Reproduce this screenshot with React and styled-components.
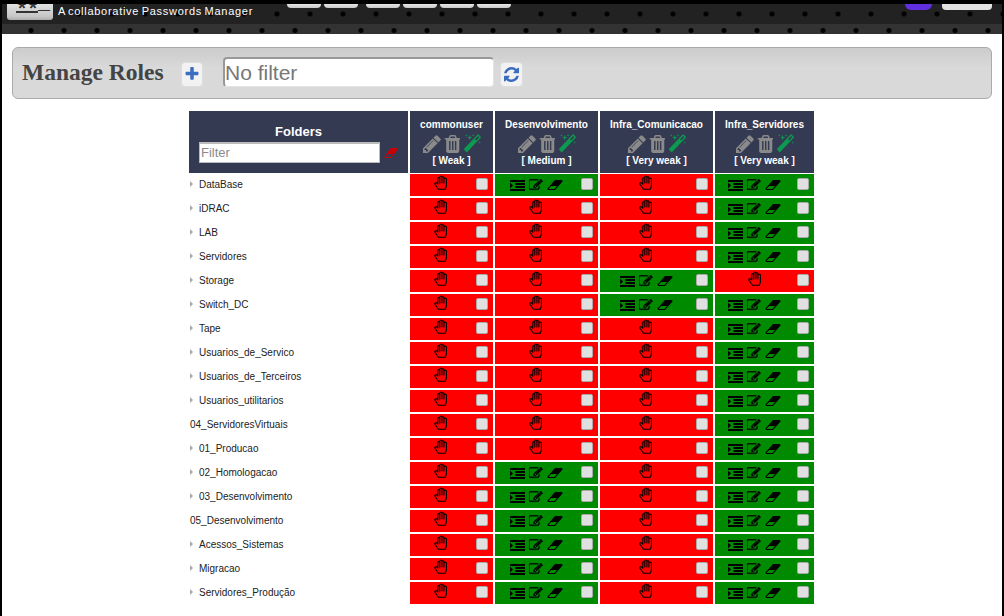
import React from "react";
import styled, { createGlobalStyle } from "styled-components";

const Global = createGlobalStyle`
  html, body { margin: 0; padding: 0; background: #000; height: 616px; overflow: hidden; }
  * { box-sizing: border-box; }
`;

const PATHS = {
  indent: "M352 832q0 14-9 23l-288 288q-9 9-23 9-13 0-22.5-9.5t-9.5-22.5v-576q0-13 9.5-22.5t22.5-9.5q14 0 23 9l288 288q9 9 9 23zm1440 480v192q0 13-9.5 22.5t-22.5 9.5h-1728q-13 0-22.5-9.5t-9.5-22.5v-192q0-13 9.5-22.5t22.5-9.5h1728q13 0 22.5 9.5t9.5 22.5zm0-384v192q0 13-9.5 22.5t-22.5 9.5h-1088q-13 0-22.5-9.5t-9.5-22.5v-192q0-13 9.5-22.5t22.5-9.5h1088q13 0 22.5 9.5t9.5 22.5zm0-384v192q0 13-9.5 22.5t-22.5 9.5h-1088q-13 0-22.5-9.5t-9.5-22.5v-192q0-13 9.5-22.5t22.5-9.5h1088q13 0 22.5 9.5t9.5 22.5zm0-384v192q0 13-9.5 22.5t-22.5 9.5h-1728q-13 0-22.5-9.5t-9.5-22.5v-192q0-13 9.5-22.5t22.5-9.5h1728q13 0 22.5 9.5t9.5 22.5z",
  edit: "M888 1184l116-116-152-152-116 116v56h96v96h56zm440-720q-16-16-33 1l-350 350q-17 17-1 33t33-1l350-350q17-17 1-33zm80 594v190q0 119-84.5 203.5t-203.5 84.5h-832q-119 0-203.5-84.5t-84.5-203.5v-832q0-119 84.5-203.5t203.5-84.5h832q63 0 117 25 15 7 18 23 3 17-9 29l-49 49q-14 14-32 8-23-6-45-6h-832q-66 0-113 47t-47 113v832q0 66 47 113t113 47h832q66 0 113-47t47-113v-126q0-13 9-22l64-64q15-15 35-7t20 29zm-96-738l288 288-672 672h-288v-288zm444 132l-92 92-288-288 92-92q28-28 68-28t68 28l152 152q28 28 28 68t-28 68z",
  eraser: "M960 1408l336-384h-768l-336 384h768zm1013-1077q15 34 9.5 71.5t-30.5 65.5l-896 1024q-38 44-96 44h-768q-38 0-69.5-20.5t-47.5-54.5q-15-34-9.5-71.5t30.5-65.5l896-1024q38-44 96-44h768q38 0 70 20.5t47 54.5z",
  trash: "M704 1376v-704q0-14-9-23t-23-9h-64q-14 0-23 9t-9 23v704q0 14 9 23t23 9h64q14 0 23-9t9-23zm256 0v-704q0-14-9-23t-23-9h-64q-14 0-23 9t-9 23v704q0 14 9 23t23 9h64q14 0 23-9t9-23zm256 0v-704q0-14-9-23t-23-9h-64q-14 0-23 9t-9 23v704q0 14 9 23t23 9h64q14 0 23-9t9-23zm-544-992h448l-48-117q-7-9-17-11h-317q-10 2-17 11zm928 32v64q0 14-9 23t-23 9h-96v948q0 83-47 143.5t-113 60.5h-832q-66 0-113-57.5t-47-140.5v-954h-96q-14 0-23-9t-9-23v-64q0-14 9-23t23-9h309l70-167q15-37 54-63t79-26h320q40 0 79 26t54 63l70 167h309q14 0 23 9t9 23z",
  pencil: "M491 1536l91-91-235-235-91 91v107h128v128h107zm523-928q0-22-22-22-10 0-17 7l-542 542q-7 7-7 17 0 22 22 22 10 0 17-7l542-542q7-7 7-17zm-54-192l416 416-832 832h-416v-416zm683 96q0 53-37 90l-166 166-416-416 166-165q36-38 90-38 53 0 91 38l235 234q37 39 37 91z",
  magic: "M1254 581l293-293-107-107-293 293zm447-293q0 27-18 45l-1286 1286q-18 18-45 18t-45-18l-198-198q-18-18-18-45t18-45l1286-1286q18-18 45-18t45 18l198 198q18 18 18 45zm-1351-190l98 30-98 30-30 98-30-98-98-30 98-30 30-98zm350 162l196 60-196 60-60 196-60-196-196-60 196-60 60-196zm930 478l98 30-98 30-30 98-30-98-98-30 98-30 30-98zm-640-640l98 30-98 30-30 98-30-98-98-30 98-30 30-98z",
  plus: "M1600 736v192q0 40-28 68t-68 28h-416v416q0 40-28 68t-68 28h-192q-40 0-68-28t-28-68v-416h-416q-40 0-68-28t-28-68v-192q0-40 28-68t68-28h416v-416q0-40 28-68t68-28h192q40 0 68 28t28 68v416h416q40 0 68 28t28 68z",
  refresh: "M1639 1056q0 5-1 7-64 268-268 434.5t-478 166.5q-146 0-282.5-55t-243.5-157l-129 129q-19 19-45 19t-45-19-19-45v-448q0-26 19-45t45-19h448q26 0 45 19t19 45-19 45l-137 137q71 66 161 102t187 36q134 0 250-65t186-179q11-17 53-117 8-23 30-23h192q13 0 22.5 9.5t9.5 22.5zm25-800v448q0 26-19 45t-45 19h-448q-26 0-45-19t-19-45 19-45l138-138q-148-137-349-137-134 0-250 65t-186 179q-11 17-53 117-8 23-30 23h-199q-13 0-22.5-9.5t-9.5-22.5v-7q65-268 270-434.5t480-166.5q146 0 284 55.5t245 156.5l130-129q19-19 45-19t45 19 19 45z",
};

const Glyph = ({ name, w, h, box, color = "currentColor", bold = 0 }) => (
  <svg width={w} height={h} viewBox={box} preserveAspectRatio="none" fill={color} stroke={bold ? color : "none"} strokeWidth={bold} style={{ flex: "none" }}>
    <path d={PATHS[name]} />
  </svg>
);

const HandGlyph = () => (
  <svg width={14} height={15} viewBox="0 0 14 15" fill="none" stroke="currentColor" strokeWidth={1.1} strokeLinejoin="round" strokeLinecap="round" style={{ flex: "none" }}>
    <path d="M4.5 14.2 L1 9.2 C.4 8.2 1.8 7.2 2.7 8 L3.8 9.2 V3.6 C3.8 2.3 5.8 2.3 5.8 3.6 V2 C5.8 .6 7.9 .6 7.9 2 V2.6 C7.9 1.4 9.9 1.4 9.9 2.6 V4 C9.9 2.9 12.4 2.9 12.4 4 V10.5 C12.4 12 11.8 13 11.2 14.2 Z M5.8 3.6 V8 M7.9 2.6 V8 M9.9 4 V8" />
  </svg>
);

const Page = styled.div`
  width: 1004px; height: 616px; padding: 4px 2px 0; background: #000; overflow: hidden;
  font-family: "Liberation Sans", Arial, sans-serif;
`;
const Shell = styled.div`
  width: 1000px; height: 612px; background: #fff; overflow: hidden;
`;
const TopBar = styled.header`
  height: 30px; overflow: hidden;
  background: linear-gradient(#222 0, #222 20px, #333 20px, #333 30px);
`;
const DotsA = styled.div`
  height: 20px; display: flex; align-items: flex-start; padding-left: 5px;
  background: radial-gradient(circle 3px at 16.5px 10px, #000 0, #000 2px, transparent 3px) -5.5px 0 / 33px 20px repeat-x;
`;
const DotsB = styled.div`
  height: 10px;
  background: radial-gradient(circle 3px at 16.5px 6.5px, #000 0, #000 2px, transparent 3px) 12.5px 0 / 33px 10px repeat-x;
`;
const Logo = styled.div`
  width: 46px; height: 16px; background: linear-gradient(#e2e2e2, #c4c4c4 80%, #aaa); border-radius: 0 0 3px 3px;
  overflow: hidden; color: #333; font: bold 20px/13px "Liberation Mono", monospace; padding-left: 9px; white-space: nowrap; display: flex;
`;
const LogoStar = styled.span`
  width: 11px; height: 16px; display: block;
  background: linear-gradient(#333, #333) 0 7px / 100% 2px no-repeat;
`;
const LogoBar = styled.span` display: block; transform: translateY(-7px); `;
const Tagline = styled.div`
  margin-left: 5px; width: 229px; color: #fff; font-size: 11px; line-height: 14px; letter-spacing: 0.72px; word-spacing: -1.2px; white-space: nowrap;
`;
const MenuGroup = styled.div`
  display: flex; gap: 3px; margin-right: ${(p) => p.$gap || 0}px;
`;
const MenuButton = styled.div`
  width: 34px; height: 4px; background: linear-gradient(#e6e6e6, #c8c8c8); border-radius: 0 0 4px 4px;
`;
const Spacer = styled.div` flex: 1; `;
const Avatar = styled.div`
  width: 27px; height: 6px; background: #6030e0; border-radius: 0 0 10px 10px;
`;
const UserButton = styled.div`
  width: 50px; height: 6px; background: #e2e2e2; border-radius: 0 0 4px 4px; margin: 0 10px 0 10px;
`;

const Content = styled.main` padding: 13px 10px 0; `;
const Panel = styled.section`
  height: 52px; display: flex; align-items: center; padding-left: 9px;
  background: linear-gradient(#ccc, #d9d9d9 40%, #d9d9d9);
  border: 1px solid #aaa; border-radius: 6px;
`;
const Title = styled.h1`
  margin: -2px 0 0; font: bold 23.5px/30px "Liberation Serif", serif; color: #444; width: 159px;
`;
const IconButton = styled.button`
  width: ${(p) => p.$w}px; height: 25px; padding: 0; border: 1px solid #ddd; border-radius: 4px; background: #f2f2f2;
  display: flex; align-items: center; justify-content: center; color: #3a6cc0; margin-top: 2px;
`;
const FilterBox = styled.input`
  width: 271px; height: 30px; margin: -2px 6px 0 20px; padding: 0; border: 1px solid #e4e4e4; border-top: 2px solid #999; border-left: 2px solid #999;
  border-radius: 4px; background: #fff; font: 21px "Liberation Sans", sans-serif; color: #666;
  &::placeholder { color: #777; opacity: 1; }
`;

const Matrix = styled.div` width: 625px; margin: 12px 0 0 177px; `;
const GridRow = styled.div`
  display: grid; grid-template-columns: 219px 83px 103px 113px 99px; column-gap: 2px;
  height: ${(p) => p.$h}px; margin-bottom: ${(p) => p.$mb}px;
`;
const FolderHead = styled.div`
  background: #343a52; color: #fff; display: flex; flex-direction: column; padding: 13px 0 0 10px;
`;
const FolderTitle = styled.div`
  width: 199px; text-align: center; font-weight: bold; font-size: 13px; line-height: 15px; margin-bottom: 3px;
`;
const FolderFilterRow = styled.div` display: flex; align-items: center; gap: 4px; `;
const FolderFilter = styled.input`
  width: 181px; height: 21px; padding: 0 1px 2px; border: 1px solid #bbb; border-width: 2px 1px 1px 1px; background: #fff;
  font: 13px "Liberation Sans", sans-serif;
  &::placeholder { color: #8a8a8a; opacity: 1; }
`;
const RoleHead = styled.div`
  background: #343a52; color: #fff; font-weight: bold; font-size: 10px; text-align: center;
  display: flex; flex-direction: column; align-items: center; padding-top: 7px;
`;
const RoleName = styled.div` line-height: 13px; height: 15px; white-space: nowrap; `;
const RoleTools = styled.div` display: flex; align-items: center; gap: 3px; height: 21px; `;
const RoleStrength = styled.div` line-height: 13px; white-space: nowrap; `;

const FolderCell = styled.div`
  display: flex; align-items: center; font-size: 10px; color: #222; padding: 0 0 2px 1px; white-space: nowrap;
`;
const Arrow = styled.span`
  width: 0; height: 0; border-left: 3px solid #aaa; border-top: 3px solid transparent; border-bottom: 3px solid transparent;
  margin-right: 6px;
`;
const AccessCell = styled.div`
  position: relative; background: ${(p) => (p.$on ? "#008a00" : "#f00")}; color: #000; display: flex; align-items: center;
`;
const Icons = styled.div`
  display: flex; align-items: center; gap: 4px; height: 100%; padding-left: ${(p) => p.$pad}px;
`;
const Hand = styled.div`
  height: 100%; display: flex; justify-content: center; padding-left: ${(p) => p.$pad}px; padding-top: 1px;
`;
const Check = styled.span`
  position: absolute; right: 5px; top: 4px; width: 12px; height: 12px; background: #e0e0e0; border: 1px solid #aaa; border-radius: 2px;
`;

const W = [
  { name: "commonuser", s: "Weak", hand: 24, allow: 66 },
  { name: "Desenvolvimento", s: "Medium", hand: 34, allow: 15 },
  { name: "Infra_Comunicacao", s: "Very weak", hand: 39, allow: 20 },
  { name: "Infra_Servidores", s: "Very weak", hand: 33, allow: 13 },
];
const rows = [
  ["DataBase", 0, 1, 0, 1], ["iDRAC", 0, 0, 0, 1], ["LAB", 0, 0, 0, 1], ["Servidores", 0, 0, 0, 1],
  ["Storage", 0, 0, 1, 0], ["Switch_DC", 0, 0, 1, 1], ["Tape", 0, 0, 0, 1], ["Usuarios_de_Servico", 0, 0, 0, 1],
  ["Usuarios_de_Terceiros", 0, 0, 0, 1], ["Usuarios_utilitarios", 0, 0, 0, 1], ["04_ServidoresVirtuais", 0, 0, 0, 1, true],
  ["01_Producao", 0, 0, 0, 1], ["02_Homologacao", 0, 1, 0, 1], ["03_Desenvolvimento", 0, 1, 0, 1],
  ["05_Desenvolvimento", 0, 1, 0, 1, true], ["Acessos_Sistemas", 0, 1, 0, 1], ["Migracao", 0, 1, 0, 1], ["Servidores_Produção", 0, 1, 0, 1],
];

const RoleHeader = ({ role }) => (
  <RoleHead>
    <RoleName>{role.name}</RoleName>
    <RoleTools>
      <Glyph name="pencil" w={18} h={18} box="128 128 1536 1536" color="#8a8a8a" />
      <Glyph name="trash" w={16} h={18} box="128 128 1408 1536" color="#8a8a8a" />
      <Glyph name="magic" w={18} h={19} box="0 0 1712 1712" color="#0c9a50" />
    </RoleTools>
    <RoleStrength>[ {role.s} ]</RoleStrength>
  </RoleHead>
);

const Cell = ({ on, role }) => (
  <AccessCell $on={on}>
    {on ? (
      <Icons $pad={role.allow}>
        <Glyph name="indent" w={15} h={11} box="0 128 1792 1408" />
        <Glyph name="edit" w={14} h={12} box="90 90 1740 1610" bold={36} />
        <Glyph name="eraser" w={16} h={10} box="0 256 2048 1280" />
      </Icons>
    ) : (
      <Hand $pad={role.hand}><HandGlyph /></Hand>
    )}
    <Check />
  </AccessCell>
);

export default function App() {
  return (
    <Page>
      <Global />
      <Shell>
        <TopBar>
          <DotsA>
            <Logo><LogoStar>*</LogoStar><LogoStar>*</LogoStar><LogoBar>_</LogoBar></Logo>
            <Tagline>A collaborative Passwords Manager</Tagline>
            <MenuGroup $gap={8}>
              <MenuButton /><MenuButton />
            </MenuGroup>
            <MenuGroup>
              <MenuButton /><MenuButton /><MenuButton /><MenuButton />
            </MenuGroup>
            <Spacer />
            <Avatar />
            <UserButton />
          </DotsA>
          <DotsB />
        </TopBar>
        <Content>
          <Panel>
            <Title>Manage Roles</Title>
            <IconButton $w={22} aria-label="add"><Glyph name="plus" w={14} h={14} box="128 128 1536 1536" /></IconButton>
            <FilterBox placeholder="No filter" />
            <IconButton $w={23} aria-label="refresh"><Glyph name="refresh" w={15} h={15} box="128 128 1536 1536" /></IconButton>
          </Panel>
          <Matrix>
            <GridRow $h={62} $mb={1}>
              <FolderHead>
                <FolderTitle>Folders</FolderTitle>
                <FolderFilterRow>
                  <FolderFilter placeholder="Filter" />
                  <Glyph name="eraser" w={14} h={10} box="0 256 2048 1280" color="#c00" />
                </FolderFilterRow>
              </FolderHead>
              {W.map((r) => <RoleHeader key={r.name} role={r} />)}
            </GridRow>
            {rows.map((row) => (
              <GridRow key={row[0]} $h={22} $mb={2}>
                <FolderCell>
                  {!row[5] && <Arrow />}
                  {row[0]}
                </FolderCell>
                {W.map((r, i) => <Cell key={r.name} on={!!row[i + 1]} role={r} />)}
              </GridRow>
            ))}
          </Matrix>
        </Content>
      </Shell>
    </Page>
  );
}
